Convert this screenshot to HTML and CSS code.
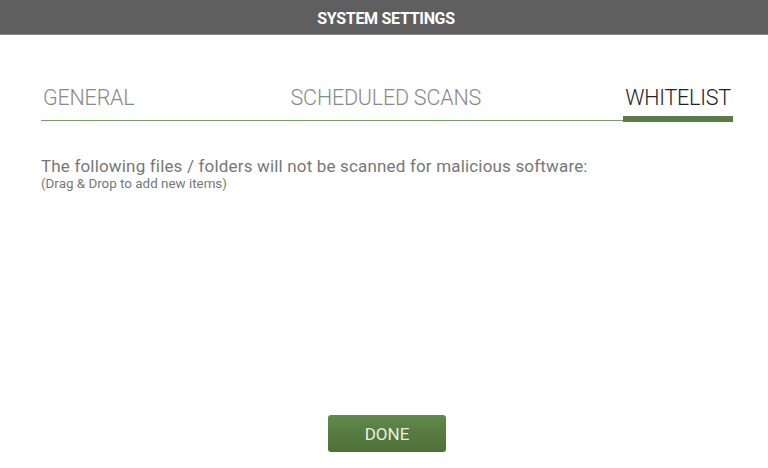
FILE: index.html
```html
<html>
    <head>
    <title>System Settings</title>
    <link rel="stylesheet" href="styles.css">
    </head>

    <body>
        <div class="header">SYSTEM SETTINGS</div>

        <div class="main">
            <ul class="tabs">
                <li>GENERAL</li>
                <li>SCHEDULED SCANS</li>
                <li class="current">WHITELIST</li>
            </ul>

            <div class="desc">
                <p>The following files / folders will not be scanned for malicious software:</p>
                <p class="hint">(Drag &amp; Drop to add new items)</p>
            </div>
        </div>

        <div class="footer">
            <button class="done">DONE</button>
        </div>
    </body>
</html>
```

FILE: styles.css
```css
*{
    padding:0;
    margin:0;
    list-style: none;
}

body{
    width:768px;
    height:468px;
    background-color:#fff;
    font-family: Roboto, "Liberation Sans", sans-serif;
    display:flex;
    flex-direction:column;
}

/*顶部标题栏*/
.header{
    height:34px;
    line-height:37px;
    background-color:#5f5f5f;
    border-bottom:1px solid #8a8a8a;
    color:#fff;
    text-align:center;
    padding-left:4px;
    font-size:16px;
    font-weight:700;
    letter-spacing:-0.3px;
}

.main{
    flex:1;
    padding:0 35px 0 41px;
}

/*选项卡*/
.tabs{
    display:flex;
    justify-content:space-between;
    margin-top:48px;
    border-bottom:1px solid #7d9a6c;
}

.tabs li{
    font-size:21.5px;
    font-weight:300;
    line-height:30px;
    color:#8a8a8a;
    padding:0 2px 3px 2px;
    letter-spacing:-0.2px;
}

.tabs li:nth-child(2){
    margin-left:12px;
}

.tabs li.current{
    color:#222;
    border-bottom:6px solid #5b7b47;
    margin-bottom:-2px;
}

/*说明文字*/
.desc{
    margin-top:35px;
    color:#777;
}

.desc p{
    font-size:17px;
    line-height:20px;
    letter-spacing:0.17px;
}

.desc p.hint{
    font-size:13.4px;
    line-height:15px;
    letter-spacing:0;
}

/*底部按钮*/
.footer{
    display:flex;
    justify-content:center;
    padding:0 0 16px 6px;
}

.done{
    width:118px;
    height:37px;
    border:none;
    border-radius:3px;
    background:linear-gradient(#628a4c, #55793f 55%, #4e7139);
    color:#e8efe2;
    font-family: Roboto, "Liberation Sans", sans-serif;
    font-size:17px;
    font-weight:400;
}
```
